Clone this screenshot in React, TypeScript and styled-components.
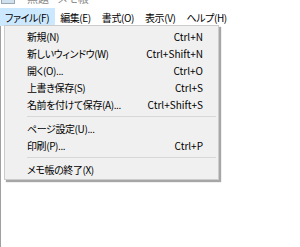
import styled, { createGlobalStyle } from 'styled-components'

const GlobalStyle = createGlobalStyle`
  html, body {
    margin: 0;
    padding: 0;
    background: #ffffff;
  }
  body {
    font-family: "Noto Sans CJK JP", "Noto Sans", sans-serif;
    font-feature-settings: "palt";
    color: #000000;
  }
`

const Window = styled.div`
  width: 300px;
  height: 247px;
  display: flex;
  flex-direction: column;
  overflow: hidden;
  background: #ffffff;
`

const TitleStrip = styled.div`
  height: 4px;
  overflow: hidden;
  display: flex;
  align-items: flex-end;
  padding-left: 1px;
`

const TitleInner = styled.div`
  display: flex;
  align-items: center;
  gap: 12px;
  margin-bottom: -1px;
  font-size: 11px;
  line-height: 14px;
  color: #888888;
`

const TitleIcon = styled.div`
  width: 12px;
  height: 10px;
  background: #cfe0ee;
  border: 1px solid #9aa9b6;
`

const MenuBar = styled.div`
  height: 18px;
  margin-top: 4px;
  display: flex;
  align-items: stretch;
  font-size: 10px;
  letter-spacing: -0.4px;
`

const BarItem = styled.div<{ $active?: boolean }>`
  display: flex;
  align-items: center;
  padding: 0 6px 0 5px;
  background: ${(p) => (p.$active ? '#cce8ff' : 'transparent')};
  white-space: nowrap;
`

const Editor = styled.div`
  position: relative;
  flex: 1;
  border-left: 1px solid #a0a0a0;
  background: #ffffff;
`

const Dropdown = styled.div`
  position: absolute;
  top: -1px;
  left: 3px;
  width: 213px;
  padding: 2px 0 1px;
  background: #f0f0f0;
  border: 1px solid #cccccc;
  box-shadow: 2px 2px 1px rgba(0, 0, 0, 0.35);
  font-size: 10px;
  display: flex;
  flex-direction: column;
`

const Item = styled.div`
  height: 17px;
  display: flex;
  align-items: center;
  justify-content: space-between;
  padding: 0 15px 0 22px;
  white-space: nowrap;
`

const Label = styled.span`
  letter-spacing: -0.4px;
`

const Shortcut = styled.span`
  color: #000000;
  font-size: 10px;
`

const Separator = styled.div`
  height: 1px;
  margin: 3px 2px 3px 22px;
  background: #d7d7d7;
`

type Entry = { label: string; key?: string } | 'sep'

const entries: Entry[] = [
  { label: '新規(N)', key: 'Ctrl+N' },
  { label: '新しいウィンドウ(W)', key: 'Ctrl+Shift+N' },
  { label: '開く(O)...', key: 'Ctrl+O' },
  { label: '上書き保存(S)', key: 'Ctrl+S' },
  { label: '名前を付けて保存(A)...', key: 'Ctrl+Shift+S' },
  'sep',
  { label: 'ページ設定(U)...' },
  { label: '印刷(P)...', key: 'Ctrl+P' },
  'sep',
  { label: 'メモ帳の終了(X)' },
]

const menus = ['ファイル(F)', '編集(E)', '書式(O)', '表示(V)', 'ヘルプ(H)']

export default function App() {
  return (
    <>
      <GlobalStyle />
      <Window>
        <TitleStrip>
          <TitleInner>
            <TitleIcon />
            <span>無題 - メモ帳</span>
          </TitleInner>
        </TitleStrip>
        <MenuBar>
          {menus.map((m, i) => (
            <BarItem key={m} $active={i === 0}>
              {m}
            </BarItem>
          ))}
        </MenuBar>
        <Editor>
          <Dropdown>
            {entries.map((e, i) =>
              e === 'sep' ? (
                <Separator key={i} />
              ) : (
                <Item key={i}>
                  <Label>{e.label}</Label>
                  {e.key && <Shortcut>{e.key}</Shortcut>}
                </Item>
              ),
            )}
          </Dropdown>
        </Editor>
      </Window>
    </>
  )
}
